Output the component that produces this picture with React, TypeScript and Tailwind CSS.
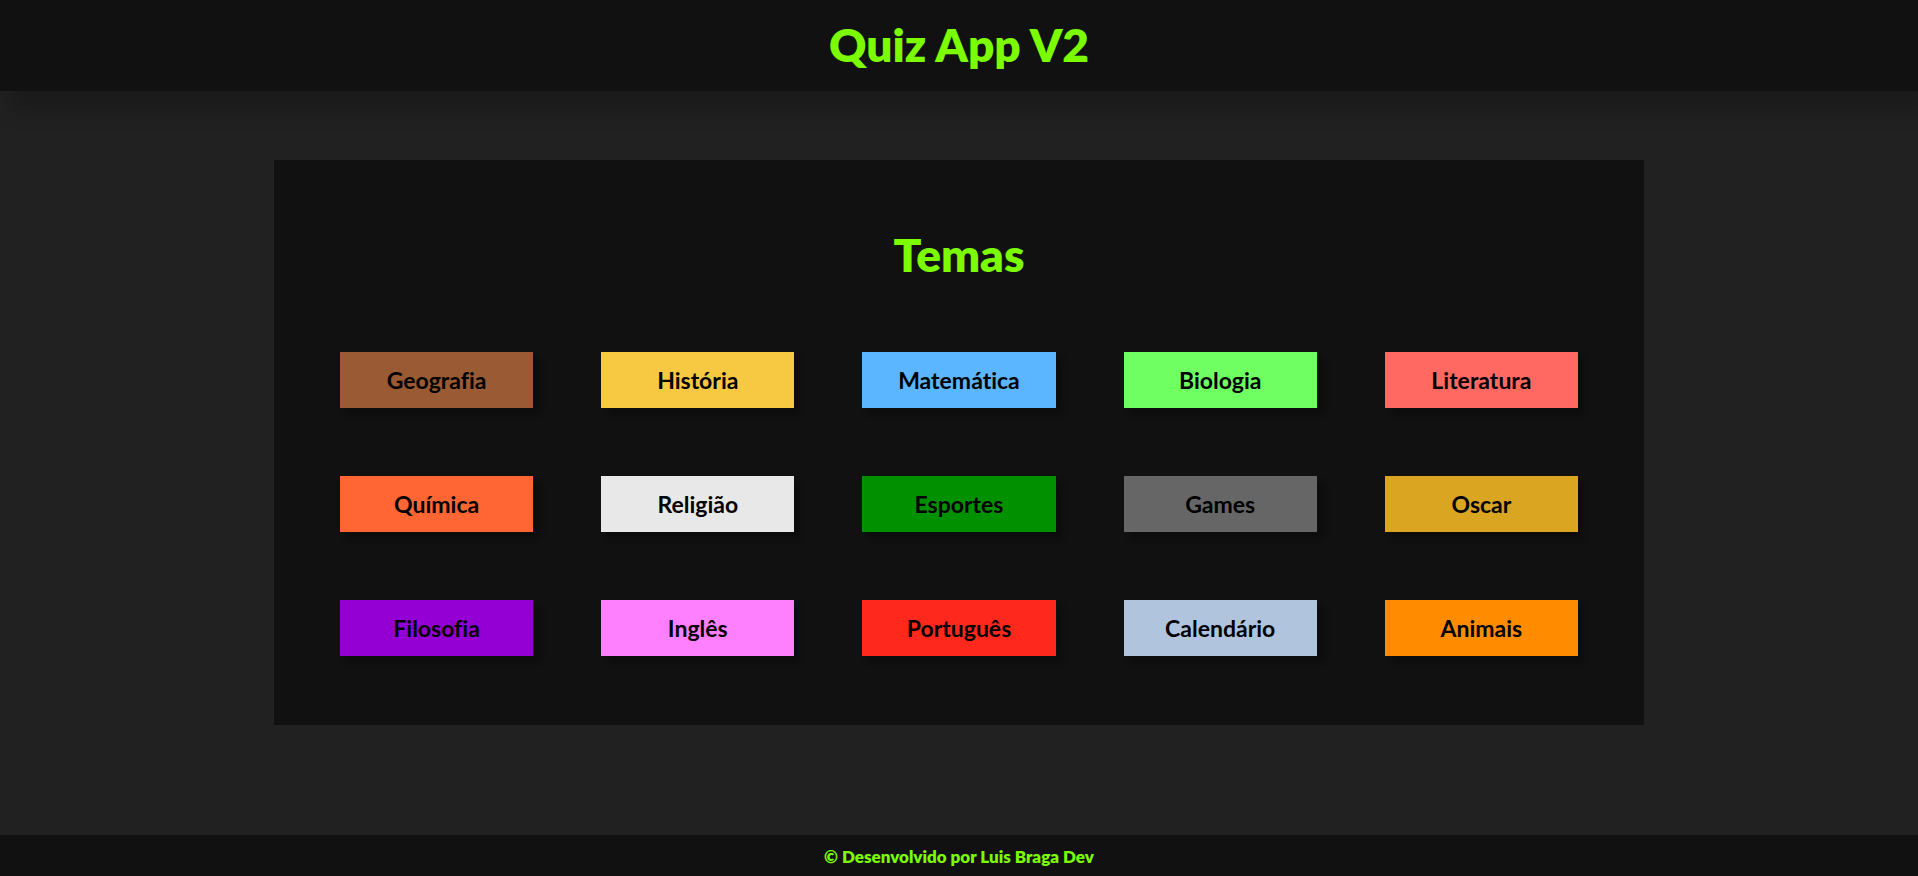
const themes = [
  { name: 'Geografia', color: 'bg-[#9a5a33]' },
  { name: 'História', color: 'bg-[#f7c943]' },
  { name: 'Matemática', color: 'bg-[#5cb6ff]' },
  { name: 'Biologia', color: 'bg-[#70ff62]' },
  { name: 'Literatura', color: 'bg-[#ff6961]' },
  { name: 'Química', color: 'bg-[#ff6633]' },
  { name: 'Religião', color: 'bg-[#e8e8e8]' },
  { name: 'Esportes', color: 'bg-[#009000]' },
  { name: 'Games', color: 'bg-[#666666]' },
  { name: 'Oscar', color: 'bg-[#daa520]' },
  { name: 'Filosofia', color: 'bg-[#9400d3]' },
  { name: 'Inglês', color: 'bg-[#ff80ff]' },
  { name: 'Português', color: 'bg-[#ff281c]' },
  { name: 'Calendário', color: 'bg-[#b0c4de]' },
  { name: 'Animais', color: 'bg-[#ff8c00]' },
];

export default function App() {
  return (
    <div className="flex min-h-screen flex-col bg-[#212121] font-['Lato',sans-serif] text-[#7cfc00] [font-variant-ligatures:none]">
      <header className="bg-[#111111] pt-[15px] pb-[17px] text-center shadow-[10px_20px_20px_rgba(0,0,0,0.2)]">
        <h1 className="text-[46px] leading-[59px] font-extrabold">Quiz App V2</h1>
      </header>

      <main className="flex-1 px-[14.285%] py-[69px]">
        <section className="bg-[#111111] px-[66px] pt-[67px] pb-[69px]">
          <h2 className="text-center text-[46px] leading-[56px] font-extrabold">Temas</h2>
          <div className="mt-[69px] grid grid-cols-5 gap-x-[68px] gap-y-[68px]">
            {themes.map(({ name, color }) => (
              <button
                key={name}
                type="button"
                className={`h-14 cursor-pointer text-[23px] leading-7 font-bold text-black shadow-[6px_6px_6px_rgba(0,0,0,0.3)] ${color}`}
              >
                {name}
              </button>
            ))}
          </div>
        </section>
      </main>

      <footer className="bg-[#111111] pt-[9px] pb-[7px] text-center">
        <p className="text-[17px] leading-[25px] font-extrabold">© Desenvolvido por Luis Braga Dev</p>
      </footer>
    </div>
  );
}
